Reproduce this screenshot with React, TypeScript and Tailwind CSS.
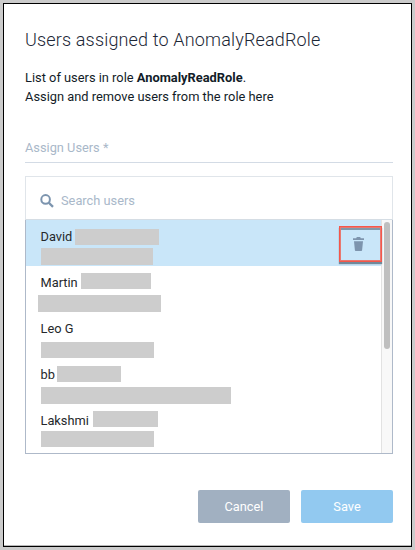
type User = { name: string; nameClass: string; surname: string; email: string };

const users: User[] = [
  { name: 'David', nameClass: 'w-[32px]', surname: 'ml-[3px] mt-[9px] w-[84px]', email: 'ml-px mt-[3px] h-[17px] w-[112px]' },
  { name: 'Martin', nameClass: 'w-[37px]', surname: 'ml-1 mt-[7px] w-[70px]', email: 'mt-[4px] -ml-[2px] h-[17px] w-[123px]' },
  { name: 'Leo G', nameClass: 'w-[36px]', surname: 'hidden', email: 'ml-px mt-[5px] h-4 w-[113px]' },
  { name: 'bb', nameClass: 'w-[17px]', surname: 'mt-[8px] w-[64px]', email: 'ml-px mt-[4px] h-[17px] w-[190px]' },
  { name: 'Lakshmi', nameClass: 'w-[53px]', surname: 'mt-[7px] w-[65px]', email: 'ml-px mt-[2px] h-4 w-[113px]' },
];

function UserRow({ user, selected }: { user: User; selected: boolean }) {
  return (
    <div className={`flex h-[46px] shrink-0 justify-between pl-[14px] ${selected ? 'bg-[#c9e6f9]' : ''}`}>
      <div>
        <div className="flex h-[25px] items-start">
          <span className={`mt-[8px] shrink-0 whitespace-nowrap pl-[0.5px] text-[12.8px] leading-[18px] text-[#25282b] ${user.nameClass}`}>
            {user.name}
          </span>
          <span className={`h-4 shrink-0 bg-[#cdcdcd] ${user.surname}`} />
        </div>
        <div className={`bg-[#cdcdcd] ${user.email}`} />
      </div>
      {selected && (
        <button className="z-10 -mr-px mt-[6px] flex h-[36px] w-[43px] items-center justify-center border border-[#f4574b] pr-[4px] shadow-[0_2px_1px_#71899a,inset_0_0_0_1px_#e87870,inset_0_3px_0_#7f98aa]">
          <svg width="11" height="14" viewBox="0 0 11 14" fill="#7d94ad">
            <path d="M0 1.3h3.2q.2-1.1.8-1.3h3q.6.2.8 1.3H11V3H0zM1 4.2h9l-.9 9.1q-.1.7-.8.7H2.7q-.7 0-.8-.7z" />
          </svg>
        </button>
      )}
    </div>
  );
}

export default function App() {
  return (
    <div className="h-[550px] w-[415px] overflow-hidden bg-[#cbcbcb] pl-[3px] pt-[3px] font-['Roboto','Liberation_Sans',sans-serif]">
      <main className="flex h-[544px] w-[409px] flex-col border border-black bg-white pl-[21px] pr-[18px] shadow-[inset_0_-1px_0_#b8b8b8]">
        <h1 className="mt-[24px] whitespace-nowrap text-[18px] font-light leading-6 tracking-[0.16px] text-[#1c2736]">
          Users assigned to AnomalyReadRole
        </h1>
        <p className="mt-[16px] whitespace-nowrap text-[12.85px] leading-[19px] text-[#121c28]">
          List of users in role <b className="font-bold">AnomalyReadRole</b>.
          <br />
          Assign and remove users from the role here
        </p>
        <label className="mt-[33px] block h-[24px] border-b border-[#d3dbe5] text-[12.8px] leading-[18px] text-[#a9b8c9]">
          Assign Users *
        </label>
        <section className="mt-[13px] flex h-[278px] flex-col">
          <div className="flex h-[44px] items-center border border-[#e0e5ea] border-b-[#d5dde4] pl-[14px] pt-[6px]">
            <svg width="14" height="14" viewBox="0 0 14 14" fill="none" stroke="#7c94ae" strokeWidth="2">
              <circle cx="5.6" cy="5.4" r="4.3" />
              <path d="m8.8 8.7 4.2 4.2" strokeWidth="2.3" />
            </svg>
            <span className="ml-[7px] text-[12.8px] leading-[18px] text-[#a9b8c9]">Search users</span>
          </div>
          <div className="flex h-[234px] border-x border-b border-[#aeb9c9]">
            <div className="flex min-w-0 flex-1 flex-col">
              {users.map((user, i) => (
                <UserRow key={user.name} user={user} selected={i === 0} />
              ))}
            </div>
            <div className="w-[11px] border-l border-[#e2e2e2] bg-[#f8f8f8] pl-[2px] pt-[2px]">
              <div className="h-[127px] w-[6px] rounded-full bg-[#bfbfbf]" />
            </div>
          </div>
        </section>
        <div className="mt-[36px] flex justify-end gap-[11px] text-[12.8px] font-normal text-white">
          <button className="h-[33px] w-[92px] rounded-[2px] bg-[#a1b0c1]">Cancel</button>
          <button className="h-[33px] w-[92px] rounded-[2px] bg-[#92c9f0]">Save</button>
        </div>
      </main>
    </div>
  );
}
